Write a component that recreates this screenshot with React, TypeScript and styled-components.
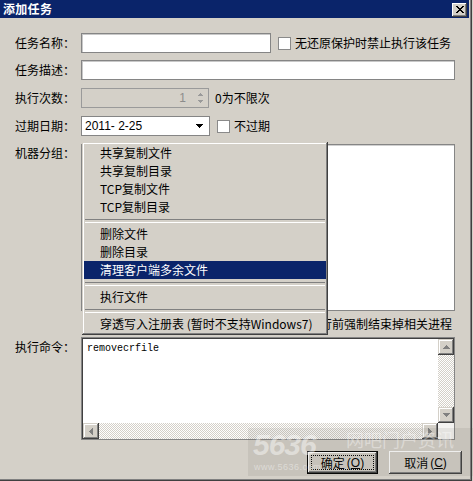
import React from "react";
import styled, { createGlobalStyle } from "styled-components";

const UI_FONT = `"Noto Sans CJK SC", "Liberation Sans", sans-serif`;

const GlobalStyle = createGlobalStyle`
  html, body { margin: 0; padding: 0; background: #d4d0c8; }
  body { font-family: ${UI_FONT}; font-size: 12px; color: #000; }
  * { box-sizing: border-box; }
`;

type Dir = "up" | "down" | "left" | "right";
function triPath(n: number, dir: Dir): string {
  const parts: string[] = [];
  for (let i = 0; i < n; i++) {
    const len = 2 * i + 1;
    const off = n - 1 - i;
    if (dir === "up") parts.push(`M${off} ${i}h${len}v1h-${len}z`);
    if (dir === "down") parts.push(`M${off} ${n - 1 - i}h${len}v1h-${len}z`);
    if (dir === "left") parts.push(`M${i} ${off}h1v${len}h-1z`);
    if (dir === "right") parts.push(`M${n - 1 - i} ${off}h1v${len}h-1z`);
  }
  return parts.join(" ");
}

const Tri: React.FC<{ dir: Dir; n: number; color: string }> = ({ dir, n, color }) => {
  const vertical = dir === "up" || dir === "down";
  const w = vertical ? 2 * n - 1 : n;
  const h = vertical ? n : 2 * n - 1;
  return (
    <svg width={w} height={h} viewBox={`0 0 ${w} ${h}`} shapeRendering="crispEdges">
      <path d={triPath(n, dir)} fill={color} />
    </svg>
  );
};

const Page = styled.div`
  position: relative;
  width: 473px;
  height: 481px;
  background: #d4d0c8;
  overflow: hidden;
`;

const Window = styled.div`
  width: 472px;
  height: 481px;
  background: #d4d0c8;
  box-shadow: inset -1px -1px #404040, inset -2px -2px #808080;
  padding: 0 3px 2px 0;
  display: flex;
  flex-direction: column;
`;

const TitleBar = styled.div`
  height: 18px;
  flex: none;
  background: #0a246a;
  display: flex;
  align-items: center;
  justify-content: space-between;
  padding: 0 2px 0 3px;
`;

const TitleText = styled.span`
  color: #fff;
  font-weight: bold;
  font-size: 12px;
  line-height: 18px;
  letter-spacing: 0.3px;
`;

const CloseButton = styled.div`
  width: 15px;
  height: 14px;
  margin-top: 1px;
  background: #d4d0c8;
  box-shadow: inset -1px -1px #404040, inset 1px 1px #fff, inset -2px -2px #808080;
  display: flex;
  align-items: center;
  justify-content: center;
  padding: 0 0 1px 0;
`;

const Body = styled.div`
  flex: 1;
  display: flex;
  flex-direction: column;
  padding: 0 14px 0 15px;
`;

const Row = styled.div<{ $mt: number; $top?: boolean }>`
  display: flex;
  align-items: ${(p) => (p.$top ? "flex-start" : "center")};
  margin-top: ${(p) => p.$mt}px;
`;

const FieldLabel = styled.div<{ $lh?: number }>`
  width: 66px;
  flex: none;
  white-space: nowrap;
  line-height: ${(p) => p.$lh ?? 20}px;
`;

const TextInput = styled.div<{ $w: number }>`
  width: ${(p) => p.$w}px;
  height: 20px;
  background: #fff;
  border: 1px solid #858585;
  box-shadow: inset 1px 1px #c8c8c8;
`;

const CheckBox = styled.div<{ $ml: number }>`
  width: 13px;
  height: 13px;
  flex: none;
  margin-left: ${(p) => p.$ml}px;
  background: #fff;
  border: 1px solid #8a8a8a;
`;

const InlineText = styled.span<{ $ml: number }>`
  margin-left: ${(p) => p.$ml}px;
  white-space: nowrap;
  line-height: 20px;
`;

const SpinBox = styled.div`
  width: 128px;
  height: 20px;
  border: 1px solid #9a9a9a;
  background: #d4d0c8;
  display: flex;
  align-items: center;
  justify-content: flex-end;
  padding-right: 3px;
`;

const SpinValue = styled.span`
  font-family: "Liberation Sans", sans-serif;
  font-size: 12px;
  color: #8c8c8c;
  margin-right: 10px;
`;

const SpinArrows = styled.div`
  width: 9px;
  display: flex;
  flex-direction: column;
  align-items: center;
  gap: 4px;
`;

const DateBox = styled.div`
  width: 129px;
  height: 20px;
  background: #fff;
  border: 1px solid #858585;
  display: flex;
  align-items: center;
  justify-content: space-between;
  padding: 0 6px 0 3px;
`;

const DateText = styled.span`
  font-family: "Liberation Sans", sans-serif;
  font-size: 12px;
  white-space: pre;
`;

const FieldColumn = styled.div`
  display: flex;
  flex-direction: column;
`;

const ListBox = styled.div`
  width: 374px;
  height: 167px;
  background: #fff;
  border: 1px solid #858585;
  box-shadow: inset 1px 1px #d0d0d0;
`;

const CheckRow = styled.div`
  height: 26px;
  display: flex;
  align-items: center;
  justify-content: flex-end;
  padding-right: 3px;
`;

const EditArea = styled.div`
  width: 374px;
  height: 103px;
  background: #fff;
  border: 1px solid #858585;
  box-shadow: inset 1px 1px #404040;
  padding: 1px 0 0 1px;
  display: grid;
  grid-template-columns: 1fr 16px;
  grid-template-rows: 1fr 16px;
`;

const EditText = styled.div`
  font-family: "Liberation Mono", monospace;
  font-size: 10px;
  line-height: 14px;
  padding: 3px 0 0 4px;
`;

const ScrollBar = styled.div<{ $vertical: boolean }>`
  display: flex;
  flex-direction: ${(p) => (p.$vertical ? "column" : "row")};
  background: repeating-conic-gradient(#ffffff 0 25%, #d4d0c8 0 50%) 0 0 / 2px 2px;
`;

const ScrollButton = styled.div`
  width: 16px;
  height: 16px;
  flex: none;
  background: #d4d0c8;
  box-shadow: inset -1px -1px #404040, inset 1px 1px #d4d0c8, inset -2px -2px #808080, inset 2px 2px #fff;
  display: flex;
  align-items: center;
  justify-content: center;
`;

const ScrollTrack = styled.div`
  flex: 1;
`;

const Corner = styled.div`
  background: #f4f3f1;
`;

const ButtonRow = styled.div`
  display: flex;
  justify-content: flex-end;
  gap: 11px;
  margin-top: 11px;
  margin-right: -7px;
`;

const DialogButton = styled.div<{ $w: number; $default?: boolean }>`
  position: relative;
  width: ${(p) => p.$w}px;
  height: 23px;
  background: #d4d0c8;
  border: ${(p) => (p.$default ? "1px solid #000" : "none")};
  box-shadow: ${(p) =>
    p.$default
      ? "inset -1px -1px #404040, inset 1px 1px #fff, inset -2px -2px #808080"
      : "inset -1px -1px #404040, inset 1px 1px #fff, inset -2px -2px #808080, inset 2px 2px #d4d0c8"};
  display: flex;
  align-items: center;
  justify-content: center;
  white-space: nowrap;
  &::after {
    content: "";
    display: ${(p) => (p.$default ? "block" : "none")};
    position: absolute;
    inset: 3px;
    border: 1px dotted #000;
  }
`;

const Accel = styled.span`
  font-family: "Liberation Sans", sans-serif;
  text-decoration: underline;
`;

const Paren = styled.span`
  font-family: "Liberation Sans", sans-serif;
  margin-left: 2px;
`;

const Menu = styled.div`
  position: absolute;
  left: 82px;
  top: 142px;
  width: 246px;
  background: #d4d0c8;
  padding: 2px;
  box-shadow: inset -1px -1px #404040, inset 1px 1px #d4d0c8, inset -2px -2px #808080, inset 2px 2px #fff;
`;

const MenuItem = styled.div<{ $active?: boolean }>`
  height: 18px;
  line-height: 18px;
  padding-left: 16px;
  white-space: nowrap;
  background: ${(p) => (p.$active ? "#0a246a" : "transparent")};
  color: ${(p) => (p.$active ? "#fff" : "#000")};
`;

const MenuSep = styled.div`
  height: 9px;
  padding: 3px 1px 4px;
  &::before {
    content: "";
    display: block;
    height: 2px;
    border-top: 1px solid #808080;
    border-bottom: 1px solid #fff;
  }
`;

const Watermark = styled.div`
  position: absolute;
  left: 248px;
  top: 428px;
  width: 225px;
  height: 48px;
  background: rgba(90, 85, 80, 0.1);
  pointer-events: none;
`;

const WmDigits = styled.span`
  position: absolute;
  left: 5px;
  top: 0px;
  font-family: "Liberation Sans", sans-serif;
  font-style: italic;
  font-weight: bold;
  font-size: 30px;
  line-height: 34px;
  letter-spacing: -1px;
  color: rgba(255, 255, 255, 0.45);
`;

const WmName = styled.span`
  position: absolute;
  left: 98px;
  top: 1px;
  font-size: 18px;
  line-height: 21px;
  color: rgba(255, 255, 255, 0.38);
  white-space: nowrap;
`;

const WmUrl = styled.span`
  position: absolute;
  left: 6px;
  top: 34px;
  font-family: "Liberation Sans", sans-serif;
  font-size: 9px;
  line-height: 11px;
  color: rgba(255, 255, 255, 0.4);
  letter-spacing: 0.5px;
`;

export default function App() {
  return (
    <>
      <GlobalStyle />
      <Page>
        <Window>
          <TitleBar>
            <TitleText>添加任务</TitleText>
            <CloseButton>
              <svg width="8" height="7" viewBox="0 0 8 7" shapeRendering="crispEdges">
                <path
                  d="M0 0h2v1H0z M6 0h2v1H6z M1 1h2v1H1z M5 1h2v1H5z M2 2h4v1H2z M3 3h2v1H3z M2 4h4v1H2z M1 5h2v1H1z M5 5h2v1H5z M0 6h2v1H0z M6 6h2v1H6z"
                  fill="#000"
                />
              </svg>
            </CloseButton>
          </TitleBar>
          <Body>
            <Row $mt={15}>
              <FieldLabel>任务名称：</FieldLabel>
              <TextInput $w={190} />
              <CheckBox $ml={7} />
              <InlineText $ml={4}>无还原保护时禁止执行该任务</InlineText>
            </Row>
            <Row $mt={7}>
              <FieldLabel>任务描述：</FieldLabel>
              <TextInput $w={374} />
            </Row>
            <Row $mt={8}>
              <FieldLabel>执行次数：</FieldLabel>
              <SpinBox>
                <SpinValue>1</SpinValue>
                <SpinArrows>
                  <Tri dir="up" n={3} color="#9a9a9a" />
                  <Tri dir="down" n={3} color="#9a9a9a" />
                </SpinArrows>
              </SpinBox>
              <InlineText $ml={6}>0为不限次</InlineText>
            </Row>
            <Row $mt={8}>
              <FieldLabel>过期日期：</FieldLabel>
              <DateBox>
                <DateText>2011- 2-25</DateText>
                <Tri dir="down" n={4} color="#000" />
              </DateBox>
              <CheckBox $ml={7} />
              <InlineText $ml={4}>不过期</InlineText>
            </Row>
            <Row $mt={8} $top>
              <FieldLabel $lh={18}>机器分组：</FieldLabel>
              <FieldColumn>
                <ListBox />
                <CheckRow>
                  <CheckBox $ml={0} />
                  <InlineText $ml={4}>执行前强制结束掉相关进程</InlineText>
                </CheckRow>
              </FieldColumn>
            </Row>
            <Row $mt={0} $top>
              <FieldLabel>执行命令：</FieldLabel>
              <EditArea>
                <EditText>removecrfile</EditText>
                <ScrollBar $vertical>
                  <ScrollButton>
                    <Tri dir="up" n={4} color="#808080" />
                  </ScrollButton>
                  <ScrollTrack />
                  <ScrollButton>
                    <Tri dir="down" n={4} color="#808080" />
                  </ScrollButton>
                </ScrollBar>
                <ScrollBar $vertical={false}>
                  <ScrollButton>
                    <Tri dir="left" n={4} color="#808080" />
                  </ScrollButton>
                  <ScrollTrack />
                  <ScrollButton>
                    <Tri dir="right" n={4} color="#808080" />
                  </ScrollButton>
                </ScrollBar>
                <Corner />
              </EditArea>
            </Row>
            <ButtonRow>
              <DialogButton $w={71} $default>
                确定<Paren>(<Accel>O</Accel>)</Paren>
              </DialogButton>
              <DialogButton $w={73}>
                取消<Paren>(<Accel>C</Accel>)</Paren>
              </DialogButton>
            </ButtonRow>
          </Body>
        </Window>
        <Menu>
          <MenuItem>共享复制文件</MenuItem>
          <MenuItem>共享复制目录</MenuItem>
          <MenuItem>TCP复制文件</MenuItem>
          <MenuItem>TCP复制目录</MenuItem>
          <MenuSep />
          <MenuItem>删除文件</MenuItem>
          <MenuItem>删除目录</MenuItem>
          <MenuItem $active>清理客户端多余文件</MenuItem>
          <MenuSep />
          <MenuItem>执行文件</MenuItem>
          <MenuSep />
          <MenuItem>穿透写入注册表 (暂时不支持Windows7)</MenuItem>
        </Menu>
        <Watermark>
          <WmDigits>5636</WmDigits>
          <WmName>网吧门户资讯</WmName>
          <WmUrl>www.5636.com</WmUrl>
        </Watermark>
      </Page>
    </>
  );
}
